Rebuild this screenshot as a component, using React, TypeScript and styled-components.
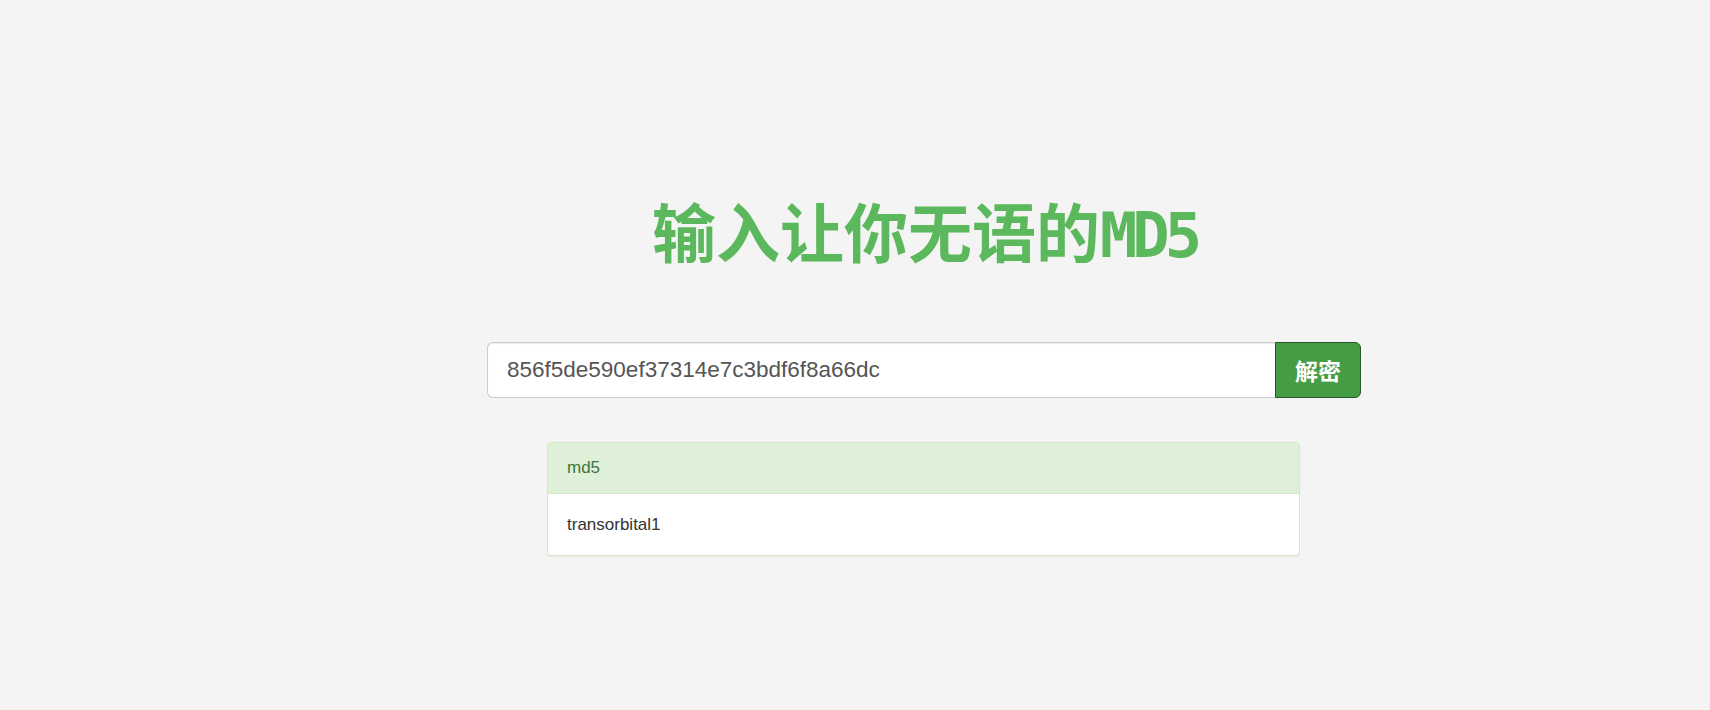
import styled, { createGlobalStyle } from 'styled-components';

const GlobalStyle = createGlobalStyle`
  html, body {
    margin: 0;
    padding: 0;
    background: #f4f4f4;
  }

  body {
    font-family: 'Liberation Sans', Arial, 'Noto Sans CJK SC', sans-serif;
    color: #333;
  }
`;

const Page = styled.div`
  min-height: 710px;
  padding-top: 197px;
  box-sizing: border-box;
`;

const Title = styled.h1`
  margin: 0 0 0 652px;
  height: 64px;
  font-family: 'Noto Sans CJK SC', sans-serif;
  font-size: 64px;
  font-weight: 700;
  line-height: 64px;
  color: #5cb85c;
  white-space: nowrap;

  > span {
    font-family: 'DejaVu Sans Mono', monospace;
    font-size: 62px;
    letter-spacing: -5px;
  }
`;

const SearchRow = styled.form`
  display: flex;
  width: 874px;
  height: 56px;
  margin: 81px 0 0 487px;
`;

const SearchInput = styled.input`
  flex: 1;
  min-width: 0;
  box-sizing: border-box;
  height: 56px;
  padding: 0 19px;
  border: 1px solid #ccc;
  border-right: none;
  border-radius: 6px 0 0 6px;
  background: #fff;
  font-family: 'Liberation Sans', Arial, sans-serif;
  font-size: 22.5px;
  color: #555;
  outline: none;
  box-shadow: inset 0 1px 1px rgba(0, 0, 0, 0.075);
`;

const DecryptButton = styled.button`
  width: 86px;
  height: 56px;
  box-sizing: border-box;
  border: 1px solid #255625;
  border-radius: 0 6px 6px 0;
  background: #449d44;
  color: #fff;
  font-family: 'Noto Sans CJK SC', sans-serif;
  font-size: 23px;
  font-weight: 700;
  cursor: pointer;
  padding: 0;
`;

const ResultPanel = styled.div`
  width: 753px;
  margin: 44px 0 0 547px;
  box-sizing: border-box;
  border: 1px solid #d6e9c6;
  border-radius: 4px;
  background: #fff;
  box-shadow: 0 1px 1px rgba(0, 0, 0, 0.05);
  overflow: hidden;
`;

const PanelHeading = styled.div`
  padding: 0 19px;
  height: 50px;
  display: flex;
  align-items: center;
  background: #dff0d8;
  border-bottom: 1px solid #d6e9c6;
  color: #3c763d;
  font-size: 17px;
`;

const PanelBody = styled.div`
  padding: 0 19px;
  height: 61px;
  display: flex;
  align-items: center;
  font-size: 17px;
  color: #333;
`;

export default function App() {
  return (
    <>
      <GlobalStyle />
      <Page>
        <Title>
          输入让你无语的<span>MD5</span>
        </Title>
        <SearchRow onSubmit={(e) => e.preventDefault()}>
          <SearchInput defaultValue="856f5de590ef37314e7c3bdf6f8a66dc" />
          <DecryptButton type="submit">解密</DecryptButton>
        </SearchRow>
        <ResultPanel>
          <PanelHeading>md5</PanelHeading>
          <PanelBody>transorbital1</PanelBody>
        </ResultPanel>
      </Page>
    </>
  );
}
